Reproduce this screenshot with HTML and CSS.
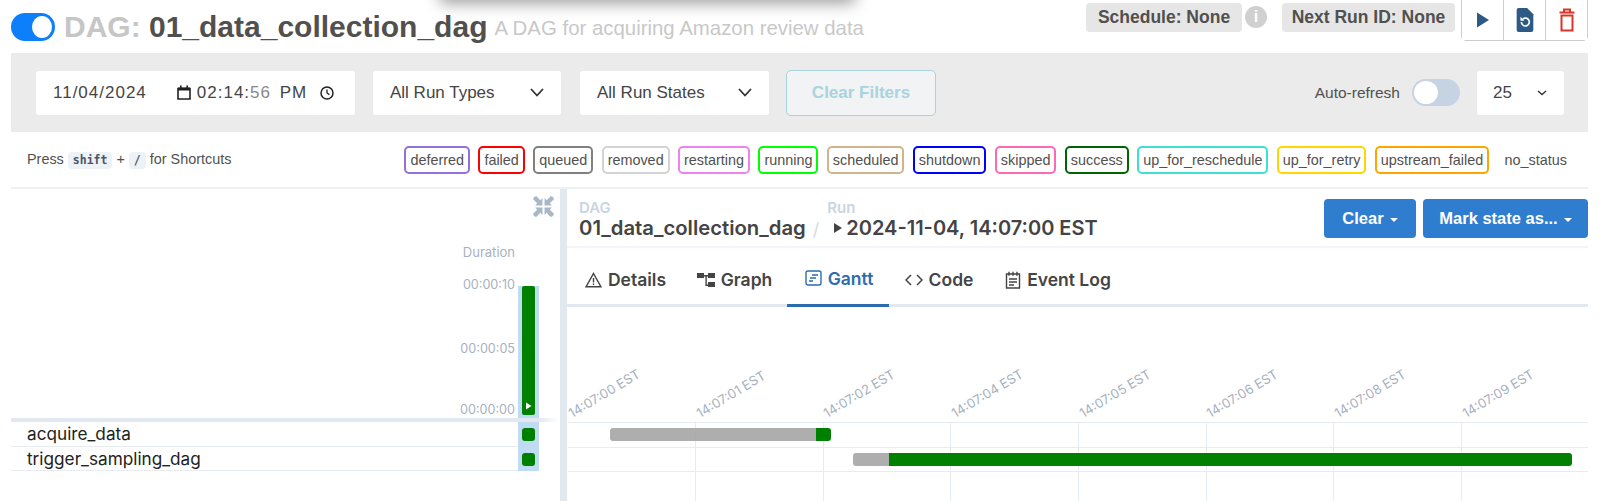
FILE: index.html
```html
<!DOCTYPE html>
<html lang="en">
<head>
    <meta charset="UTF-8">
    <meta name="viewport" content="width=device-width, initial-scale=1.0">
    <title>01_data_collection_dag - Grid</title>
    <link rel="stylesheet" href="styles.css">
</head>
<body>
<div class="menu-shadow"></div>
<div class="page">
    <header class="title-row">
        <div class="pause-toggle"><span class="pause-knob"></span></div>
        <h1 class="dag-title"><span class="dag-prefix">DAG:</span> 01_data_collection_dag</h1>
        <span class="dag-desc">A DAG for acquiring Amazon review data</span>
        <div class="title-right">
            <span class="info-badge badge-schedule">Schedule: None</span>
            <span class="info-icon">i</span>
            <span class="info-badge badge-next">Next Run ID: None</span>
            <div class="action-group">
                <button class="action-btn">
                    <svg width="14" height="18" viewBox="0 0 14 18"><path d="M1 1.5 13 9 1 16.5z" fill="#2c5a85"/></svg>
                </button>
                <button class="action-btn">
                    <svg width="20" height="26" viewBox="0 0 18 25"><path d="M3 1h8l6 6v15a2 2 0 0 1-2 2H3a2 2 0 0 1-2-2V3a2 2 0 0 1 2-2z" fill="#2c5a85"/><path d="M5.500 14.500a3.800 3.800 0 1 0 1.300-2.900" fill="none" stroke="#fff" stroke-width="1.600"/><path d="M4.600 9.400v3.800h3.800z" fill="#fff"/></svg>
                </button>
                <button class="action-btn">
                    <svg width="16" height="24" viewBox="0 0 16 24"><path d="M0.500 4.500h15M5 4V1.500h6V4M2.500 7.500h11V22.500h-11z" fill="none" stroke="#d9362b" stroke-width="2"/></svg>
                </button>
            </div>
        </div>
    </header>

    <section class="filter-bar">
        <div class="field date-field">
            <span>11/04/2024</span>
            <svg class="date-cal" width="14" height="15" viewBox="0 0 14 15"><path d="M1 3.500h12v10.500H1z" fill="none" stroke="#222" stroke-width="1.600"/><path d="M1 2.500h12v3H1zM3 .5h1.600v2H3zM9.400 .5H11v2H9.400z" fill="#222"/></svg>
            <span class="date-time">02:14:<span class="date-sec">56</span> PM</span>
            <svg class="date-clock" width="14" height="14" viewBox="0 0 14 14"><circle cx="7" cy="7" r="6" fill="none" stroke="#222" stroke-width="1.500"/><path d="M7 3.500V7l2.400 1.600" fill="none" stroke="#222" stroke-width="1.300"/></svg>
        </div>
        <div class="field select-field select-types">
            <span>All Run Types</span>
            <svg width="14" height="9" viewBox="0 0 14 9"><path d="M1 1l6 6.500L13 1" fill="none" stroke="#333" stroke-width="1.800"/></svg>
        </div>
        <div class="field select-field select-states">
            <span>All Run States</span>
            <svg width="14" height="9" viewBox="0 0 14 9"><path d="M1 1l6 6.500L13 1" fill="none" stroke="#333" stroke-width="1.800"/></svg>
        </div>
        <button class="clear-filters">Clear Filters</button>
        <div class="refresh">
            <span class="refresh-label">Auto-refresh</span>
            <div class="refresh-toggle"><span class="refresh-knob"></span></div>
            <div class="field select-field select-count">
                <span>25</span>
                <svg width="10" height="6" viewBox="0 0 10 6"><path d="M1 1l4 3.500L9 1" fill="none" stroke="#333" stroke-width="1.400"/></svg>
            </div>
        </div>
    </section>

    <section class="legend-row">
        <div class="shortcuts">Press <kbd class="key">shift</kbd> + <kbd class="key">/</kbd> for Shortcuts</div>
        <div class="legend">
            <span class="chip" style="border-color:#9370db">deferred</span>
            <span class="chip" style="border-color:#f00">failed</span>
            <span class="chip" style="border-color:#808080">queued</span>
            <span class="chip" style="border-color:#d3d3d3">removed</span>
            <span class="chip" style="border-color:#ee82ee">restarting</span>
            <span class="chip" style="border-color:#0f0">running</span>
            <span class="chip" style="border-color:#d2b48c">scheduled</span>
            <span class="chip" style="border-color:#00f">shutdown</span>
            <span class="chip" style="border-color:#ff69b4">skipped</span>
            <span class="chip" style="border-color:#006400">success</span>
            <span class="chip" style="border-color:#40e0d0">up_for_reschedule</span>
            <span class="chip" style="border-color:#ffd700">up_for_retry</span>
            <span class="chip" style="border-color:#ffa500">upstream_failed</span>
            <span class="chip chip-none">no_status</span>
        </div>
    </section>

    <main class="panes">
        <div class="grid-pane">
            <div class="grid-head">
                <svg class="collapse-icon" width="21" height="21" viewBox="0 0 20 20" fill="#a9b7c6"><path d="M1 1l2-1 4 4 2-2v7H2l2-2-4-4zM19 1l-2-1-4 4-2-2v7h7l-2-2 4-4zM1 19l2 1 4-4 2 2v-7H2l2 2-4 4zM19 19l-2 1-4-4-2 2v-7h7l-2 2 4 4z"/></svg>
                <div class="duration-col">
                    <div class="duration-labels">
                        <span class="duration-title">Duration</span>
                        <span class="tick tick-top">00:00:10</span>
                        <span class="tick tick-mid">00:00:05</span>
                        <span class="tick tick-low">00:00:00</span>
                    </div>
                    <div class="run-bar-wrap">
                        <div class="run-bar">
                            <svg width="7" height="8" viewBox="0 0 7 8"><path d="M1 .5 6.500 4 1 7.500z" fill="#fff"/></svg>
                        </div>
                    </div>
                </div>
            </div>
            <div class="grid-sep"></div>
            <div class="task-row">
                <span class="task-name">acquire_data</span>
                <div class="task-cell"><span class="task-square"></span></div>
            </div>
            <div class="task-row">
                <span class="task-name">trigger_sampling_dag</span>
                <div class="task-cell"><span class="task-square"></span></div>
            </div>
        </div>
        <div class="pane-divider"></div>
        <div class="detail-pane">
            <div class="crumbs">
                <div class="crumb">
                    <div class="crumb-label">DAG</div>
                    <div class="crumb-value">01_data_collection_dag</div>
                </div>
                <span class="crumb-slash">/</span>
                <div class="crumb crumb-run">
                    <div class="crumb-label">Run</div>
                    <div class="crumb-value"><svg class="run-icon" width="10" height="12" viewBox="0 0 10 12"><path d="M1 1l8 5-8 5z" fill="#444"/></svg>2024-11-04, 14:07:00 EST</div>
                </div>
                <div class="crumb-actions">
                    <button class="blue-btn btn-clear">Clear<span class="caret"></span></button>
                    <button class="blue-btn btn-mark">Mark state as...<span class="caret"></span></button>
                </div>
            </div>
            <nav class="tabs">
                <a class="tab tab-details">
                    <svg width="17" height="16" viewBox="0 0 17 16"><path d="M8.500 1.500 16 14.800H1zM8.500 6v4.500M8.500 11.600v1.400" fill="none" stroke="#444" stroke-width="1.400"/></svg>
                    Details
                </a>
                <a class="tab tab-graph">
                    <svg width="18" height="16" viewBox="0 0 18 16" fill="#444"><path d="M0 1h7v5H0zM11 1h7v5h-7zM11 10h7v5h-7z"/><path d="M7 3h4v1.400H9.800v8.100H11v1.400H8.400V4.400H7z"/></svg>
                    Graph
                </a>
                <a class="tab tab-gantt active">
                    <svg width="17" height="16" viewBox="0 0 17 16"><rect x="1" y="1" width="15" height="14" rx="2" fill="none" stroke="#2b6cb0" stroke-width="1.400"/><path d="M7 5h6M5 8h6M4 11h4" fill="none" stroke="#2b6cb0" stroke-width="1.400"/></svg>
                    Gantt
                </a>
                <a class="tab tab-code">
                    <svg width="18" height="12" viewBox="0 0 18 12"><path d="M6 1 1 6l5 5M12 1l5 5-5 5" fill="none" stroke="#444" stroke-width="1.500"/></svg>
                    Code
                </a>
                <a class="tab tab-log">
                    <svg width="16" height="18" viewBox="0 0 16 18"><path d="M1.500 3h13v14h-13zM4 .8v4M8 .8v4M12 .8v4M4 8h8M4 11h8M4 14h5" fill="none" stroke="#444" stroke-width="1.400"/></svg>
                    Event Log
                </a>
            </nav>
            <div class="gantt">
                <div class="gantt-axis">
                    <div class="axis-cell"><span class="axis-label">14:07:00 EST</span></div>
                    <div class="axis-cell"><span class="axis-label">14:07:01 EST</span></div>
                    <div class="axis-cell"><span class="axis-label">14:07:02 EST</span></div>
                    <div class="axis-cell"><span class="axis-label">14:07:04 EST</span></div>
                    <div class="axis-cell"><span class="axis-label">14:07:05 EST</span></div>
                    <div class="axis-cell"><span class="axis-label">14:07:06 EST</span></div>
                    <div class="axis-cell"><span class="axis-label">14:07:08 EST</span></div>
                    <div class="axis-cell"><span class="axis-label">14:07:09 EST</span></div>
                </div>
                <div class="gantt-body">
                    <div class="gantt-row">
                        <span class="bar-queued" style="margin-left:42px;width:206px"></span><span class="bar-success" style="width:15px"></span>
                    </div>
                    <div class="gantt-row">
                        <span class="bar-queued" style="margin-left:285px;width:36px"></span><span class="bar-success" style="width:683px"></span>
                    </div>
                </div>
            </div>
        </div>
    </main>
</div>
</body>
</html>
```

FILE: styles.css
```css
html, body {
    margin: 0;
    padding: 0;
    background-color: #fff;
}
body {
    height: 501px;
    overflow: hidden;
    font-family: "Liberation Sans", Arial, sans-serif;
    color: #51504f;
    position: relative;
}
button {
    font-family: inherit;
    cursor: pointer;
}
.menu-shadow {
    position: absolute;
    top: -30px;
    left: 440px;
    width: 415px;
    height: 30px;
    box-shadow: 0 3px 16px rgba(0, 0, 0, 0.4);
}
.page {
    padding: 0 12px 0 11px;
}

/* title */
.title-row {
    display: flex;
    align-items: center;
    height: 53px;
}
.pause-toggle {
    width: 44px;
    height: 28px;
    margin-top: 1px;
    border-radius: 14px;
    background-color: #0d7ffb;
    box-sizing: border-box;
    padding: 3px 3px 3px 21px;
}
.pause-knob {
    display: block;
    width: 20px;
    height: 22px;
    border-radius: 50%;
    background-color: #fff;
}
.dag-title {
    margin: 0 0 0 9px;
    font-size: 30px;
    font-weight: 700;
    white-space: nowrap;
    color: #51504f;
}
.dag-prefix {
    color: #c6c6c6;
}
.dag-desc {
    margin: 3px 0 0 7px;
    font-size: 20.400px;
    color: #c8c8c8;
    white-space: nowrap;
}
.title-right {
    margin-left: auto;
    display: flex;
    align-items: flex-start;
    align-self: flex-start;
}
.info-badge {
    display: block;
    height: 29px;
    line-height: 29px;
    margin-top: 3px;
    background-color: #e6e6e6;
    border-radius: 4px;
    font-size: 17.500px;
    font-weight: 700;
    text-align: center;
    box-sizing: border-box;
}
.badge-schedule {
    width: 156px;
}
.badge-next {
    width: 173px;
}
.info-icon {
    width: 22px;
    height: 22px;
    margin: 6px 15px 0 3px;
    border-radius: 50%;
    background-color: #d0d0d0;
    color: #fff;
    font-size: 16px;
    font-weight: 700;
    line-height: 22px;
    text-align: center;
}
.action-group {
    display: flex;
    height: 41px;
    margin-left: 6px;
    box-sizing: border-box;
    border: 1px solid #ccc;
    border-top: 0;
    border-radius: 0 0 5px 5px;
}
.action-btn {
    width: 42px;
    padding: 0;
    background: #fff;
    border: 0;
    border-left: 1px solid #ccc;
    display: flex;
    align-items: center;
    justify-content: center;
}
.action-btn:first-child {
    border-left: 0;
    width: 41px;
}

/* filters */
.filter-bar {
    display: flex;
    align-items: center;
    height: 79px;
    box-sizing: border-box;
    padding: 0 24px 0 25px;
    background-color: #ebebec;
}
.field {
    display: flex;
    align-items: center;
    height: 44px;
    box-sizing: border-box;
    background-color: #fff;
    border-radius: 3px;
    font-size: 17px;
    color: #444;
    white-space: nowrap;
}
.date-field {
    width: 319px;
    padding-left: 17px;
    letter-spacing: 1px;
}
.date-cal {
    margin-left: 30px;
    margin-right: 6px;
}
.date-time {
    width: 123px;
    word-spacing: 3px;
}
.date-sec {
    color: #888;
}
.select-field {
    justify-content: space-between;
    padding: 0 17px;
}
.select-types {
    width: 188px;
    margin-left: 18px;
}
.select-states {
    width: 189px;
    margin-left: 19px;
}
.clear-filters {
    width: 150px;
    height: 46px;
    margin-left: 17px;
    box-sizing: border-box;
    background-color: #f1f3f4;
    border: 1.500px solid #a8d2dc;
    border-radius: 5px;
    color: #a9d3de;
    font-size: 17px;
    font-weight: 700;
}
.refresh {
    margin-left: auto;
    display: flex;
    align-items: center;
}
.refresh-label {
    font-size: 15.500px;
}
.refresh-toggle {
    width: 48px;
    height: 27px;
    margin-left: 12px;
    box-sizing: border-box;
    padding: 2px;
    border-radius: 14px;
    background-color: #c5d3e3;
}
.refresh-knob {
    display: block;
    width: 24px;
    height: 23px;
    border-radius: 50%;
    background-color: #fff;
}
.select-count {
    width: 87px;
    margin-left: 17px;
    padding: 0 17px 0 16px;
}

/* legend */
.legend-row {
    display: flex;
    align-items: center;
    justify-content: space-between;
    height: 57px;
    box-sizing: border-box;
    padding: 0 15px 0 16px;
    border-bottom: 2px solid #edf0f5;
    font-size: 14.400px;
}
.shortcuts {
    white-space: nowrap;
}
.key {
    display: inline-block;
    padding: 1px 5px 2px;
    background-color: #edf2f7;
    border-radius: 4px;
    font-family: "DejaVu Sans Mono", monospace;
    font-size: 11.500px;
    font-weight: 700;
    color: #4a5568;
}
.legend {
    display: flex;
    gap: 8.400px;
}
.chip {
    padding: 3px 4px;
    line-height: 18px;
    border: 2px solid;
    border-radius: 5px;
    white-space: nowrap;
}
.chip-none {
    border-color: transparent;
    margin-left: 1px;
}

/* panes */
.panes {
    display: flex;
    height: 312px;
}
.grid-pane {
    width: 549px;
    flex: none;
}
.grid-head {
    height: 227px;
    display: flex;
    flex-direction: column;
    align-items: flex-end;
    padding-right: 6px;
    box-sizing: border-box;
    padding-top: 7px;
}
.collapse-icon {
    display: block;
    flex: none;
}
.duration-col {
    display: flex;
    margin-right: 15px;
    margin-top: 22px;
}
.duration-labels {
    position: relative;
    width: 70px;
    height: 165px;
    text-align: right;
    font-family: Inter, sans-serif;
    font-size: 12.600px;
    color: #a7b1be;
}
.duration-title {
    display: block;
    padding-top: 5px;
    font-size: 13px;
}
.tick {
    position: absolute;
    right: 0;
    white-space: nowrap;
}
.tick-top {
    top: 38px;
}
.tick-mid {
    top: 102px;
}
.tick-low {
    top: 163px;
}
.run-bar-wrap {
    width: 21px;
    height: 132px;
    margin: 47px 0 0 3px;
    padding: 0 4px 2px;
    box-sizing: border-box;
    background-color: #bfdcf2;
}
.run-bar {
    height: 129px;
    border-radius: 2px;
    background-color: #008000;
    display: flex;
    align-items: flex-end;
    justify-content: center;
    padding-bottom: 5px;
    box-sizing: border-box;
}
.grid-sep {
    height: 4px;
    margin-top: 2px;
    background: linear-gradient(to right, #e2e8f0 96%, #fff);
}
.task-row {
    display: flex;
    align-items: center;
    justify-content: space-between;
    height: 24.500px;
    box-sizing: border-box;
    padding-left: 16px;
    margin-right: 21px;
    border-bottom: 1.500px solid #e7ecf3;
    font-family: Inter, sans-serif;
    font-size: 17.200px;
    color: #222;
}
.task-cell {
    width: 21px;
    height: 24.500px;
    margin-bottom: -1.500px;
    display: flex;
    align-items: center;
    justify-content: center;
    background-color: #bfdcf2;
}
.task-square {
    width: 13px;
    height: 13px;
    border-radius: 3px;
    background-color: #008000;
}
.pane-divider {
    width: 7px;
    flex: none;
    background-color: #e2e8f0;
}
.detail-pane {
    flex: 1;
    min-width: 0;
    font-family: Inter, sans-serif;
}

/* run header */
.crumbs {
    display: flex;
    align-items: flex-start;
    height: 59px;
    box-sizing: border-box;
    padding: 13px 0 0 12px;
    border-bottom: 2px solid #f1f4f8;
}
.crumb-label {
    font-size: 15px;
    line-height: 12px;
    font-weight: 600;
    color: #cbd5e0;
}
.crumb-value {
    display: flex;
    align-items: center;
    gap: 3px;
    margin-top: 3px;
    font-size: 20.300px;
    line-height: 22px;
    font-weight: 600;
    color: #444;
    white-space: nowrap;
}
.crumb-run .crumb-value {
    font-size: 20px;
}
.run-icon {
    margin-left: 6px;
}
.crumb-slash {
    margin: 17px 8px 0 7px;
    font-size: 18px;
    color: #d5dbe3;
}
.crumb-actions {
    margin-left: auto;
    display: flex;
    gap: 7px;
    margin-top: -3px;
}
.blue-btn {
    height: 39px;
    box-sizing: border-box;
    background-color: #2f7dce;
    border: 0;
    border-radius: 4px;
    color: #fff;
    font-family: "Liberation Sans", Arial, sans-serif;
    font-size: 16.500px;
    font-weight: 700;
}
.btn-clear {
    width: 92px;
}
.btn-mark {
    width: 165px;
}
.caret {
    display: inline-block;
    margin-left: 6px;
    vertical-align: 2px;
    border-top: 4px solid #fff;
    border-left: 4px solid transparent;
    border-right: 4px solid transparent;
}

/* tabs */
.tabs {
    display: flex;
    height: 59px;
    box-sizing: border-box;
    border-bottom: 3px solid #e2e8f0;
}
.tab {
    display: flex;
    align-items: center;
    justify-content: center;
    gap: 6px;
    height: 59px;
    box-sizing: border-box;
    padding-top: 4px;
    font-size: 17.500px;
    font-weight: 600;
    color: #444;
    white-space: nowrap;
}
.tab-details {
    width: 105px;
    margin-left: 6px;
}
.tab-graph {
    width: 109px;
    padding-left: 4px;
}
.tab-gantt {
    width: 102px;
    padding-left: 2px;
}
.tab-code {
    width: 92px;
    margin-left: 3px;
    padding-left: 2px;
}
.tab-log {
    width: 140px;
    padding-left: 8px;
}
.active {
    color: #2b6cb0;
    border-bottom: 3px solid #2b6cb0;
}

/* gantt chart */
.gantt {
    padding-left: 1px;
}
.gantt-axis {
    display: flex;
    height: 115px;
}
.axis-cell {
    width: 127.700px;
    flex: none;
    position: relative;
}
.axis-label {
    position: absolute;
    left: 5px;
    bottom: 2px;
    font-size: 13px;
    line-height: 14px;
    color: #a7b1be;
    white-space: nowrap;
    transform: rotate(-31deg);
    transform-origin: left bottom;
}
.gantt-body {
    width: 1020px;
    border-top: 1.500px solid #e7ecf3;
    height: 90px;
    background-image: repeating-linear-gradient(to right, #e7ecf3 0, #e7ecf3 1px, transparent 1px, transparent 127.700px);
    background-position: 127px 0;
    background-repeat: no-repeat;
    background-size: 893px 100%;
}
.gantt-row {
    display: flex;
    align-items: center;
    height: 24.500px;
    box-sizing: border-box;
    border-bottom: 1.500px solid #e7ecf3;
}
.bar-queued,
.bar-success {
    height: 13px;
    flex: none;
}
.bar-queued {
    background-color: rgba(160, 160, 160, 0.85);
    border-radius: 3px 0 0 3px;
}
.bar-success {
    background-color: #008000;
    border-radius: 0 3px 3px 0;
}
```
